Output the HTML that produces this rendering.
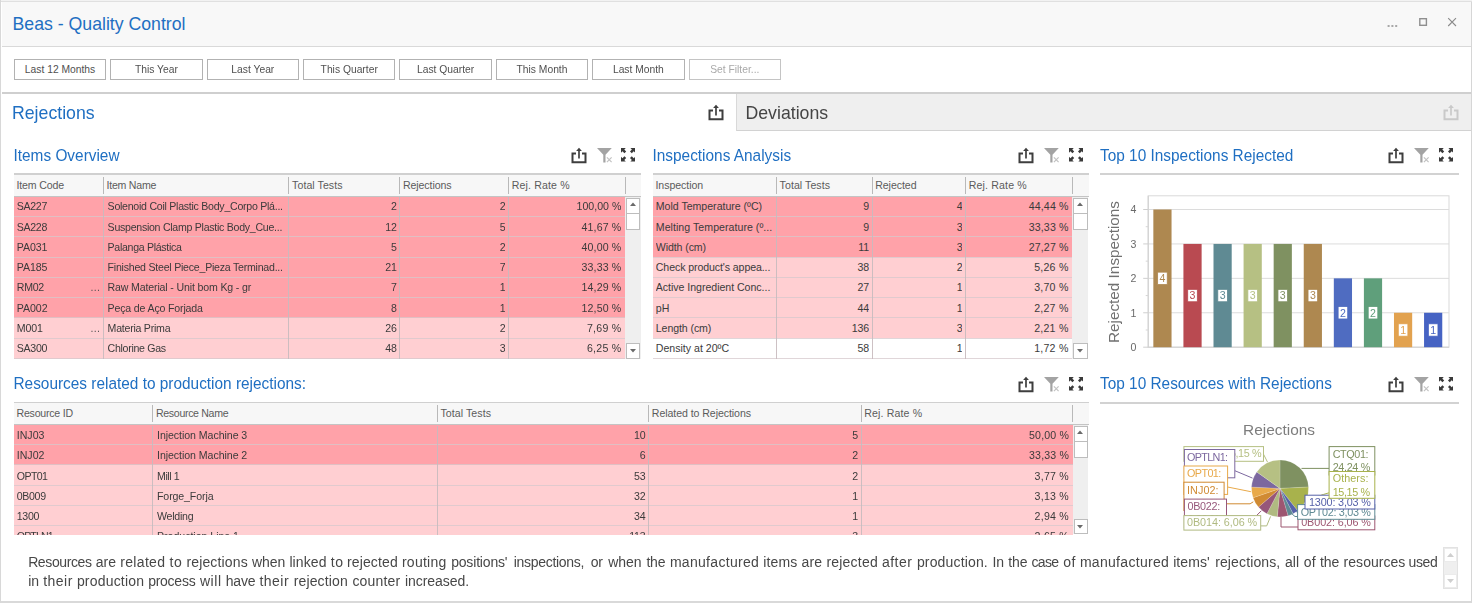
<!DOCTYPE html>
<html><head><meta charset="utf-8"><title>Beas - Quality Control</title>
<style>
*{box-sizing:border-box;margin:0;padding:0}
html,body{width:1472px;height:603px;overflow:hidden;background:#fff}
body{font-family:"Liberation Sans",sans-serif;position:relative;color:#3a3a3a}
.abs{position:absolute}
.wrap{position:absolute;left:0;top:0;width:1472px;height:603px;overflow:hidden;filter:blur(0.35px)}
.frame{position:absolute;left:0;top:0;width:1472px;height:603px;border-left:1.6px solid #d8d8d8;border-right:1.7px solid #d6d6d6;border-bottom:2.3px solid #d9d9d9;pointer-events:none}
.frame:before{content:"";position:absolute;left:0;top:0;width:1472px;height:0.9px;background:#f2f2f2}
.frame:after{content:"";position:absolute;left:0;top:0.9px;width:1472px;height:1px;background:#e0e0e0}
.titlebar{position:absolute;left:2px;top:1px;width:1469px;height:46px;background:#f8f8f8;border-bottom:1.5px solid #d9d9d9}
.h1{position:absolute;color:#1f6fc2;font-size:17.7px;white-space:nowrap;line-height:20px;transform:scaleY(1.07);transform-origin:0 62%}
.h2{position:absolute;color:#1f6fc2;font-size:15.4px;white-space:nowrap;line-height:20px;transform:scaleY(1.06);transform-origin:0 62%}
.btn{position:absolute;top:59px;height:20.6px;border:1px solid #b2b2b2;background:#fff;font-size:10.3px;line-height:20.4px;text-align:center;color:#505050;white-space:nowrap}
.ic{position:absolute;width:16px;height:16px}
.tbl{position:absolute;overflow:hidden;font-size:10.6px;letter-spacing:-0.2px;color:#3b3b3b}
.tl{position:absolute;left:0;top:0;width:100%;height:1.7px;background:#d0d0d0}
.hd{position:absolute;left:0;top:1.7px;height:22.3px;background:#f7f7f7;border-bottom:1.5px solid #c4c4c4}
.ht{position:absolute;top:2px;line-height:20px;color:#5b5b5b;white-space:nowrap}
.hs{position:absolute;top:4px;width:1px;height:17px;background:#b9b9b9}
.rw{position:absolute;left:0}
.c{position:absolute;top:0px;line-height:20px;white-space:nowrap;overflow:hidden}
.c.r{text-align:right}
.dots{position:absolute;left:73.7px;top:0;letter-spacing:0.3px;color:#555}
.rl{position:absolute;left:0;height:1px;background:rgba(214,200,204,0.75)}
.vs{position:absolute;width:1px;background:rgba(200,186,190,0.9)}
.sb{position:absolute;background:#efefef}
.sbb{position:absolute;background:#fff;border:1.2px solid #bdbdbd}
.hr{position:absolute;height:1.7px;background:#d2d2d2}
</style></head><body>
<div class="wrap">

<div class="titlebar"></div>
<div class="h1" style="left:12.5px;top:14px">Beas - Quality Control</div>
<svg class="abs" style="left:1386px;top:14px" width="74" height="16" viewBox="0 0 74 16"><g fill="#a8a8a8"><rect x="1.6" y="11" width="2" height="2"/><rect x="5.4" y="11" width="2" height="2"/><rect x="9.2" y="11" width="2" height="2"/></g><rect x="33.8" y="4.7" width="6.6" height="6.6" fill="none" stroke="#8f8f8f" stroke-width="1.4"/><path d="M62.2 4.2L70 12M70 4.2L62.2 12" stroke="#8a8a8a" stroke-width="1.1" fill="none"/></svg>
<div class="btn" style="left:13.90px;width:92.3px">Last 12 Months</div>
<div class="btn" style="left:110.29px;width:92.3px">This Year</div>
<div class="btn" style="left:206.68px;width:92.3px">Last Year</div>
<div class="btn" style="left:303.07px;width:92.3px">This Quarter</div>
<div class="btn" style="left:399.46px;width:92.3px">Last Quarter</div>
<div class="btn" style="left:495.85px;width:92.3px">This Month</div>
<div class="btn" style="left:592.24px;width:92.3px">Last Month</div>
<div class="btn" style="left:688.63px;width:92.3px;color:#a9a9a9;border-color:#c4c4c4">Set Filter...</div>
<div class="abs" style="left:2px;top:92px;width:1469px;height:1.6px;background:#cfcfcf"></div>
<div class="abs" style="left:736px;top:93.5px;width:1735px;height:37.5px;background:#efefef;border-left:1px solid #d9d9d9;border-bottom:1.6px solid #d2d2d2;width:734.5px"></div>
<div class="h1" style="left:12px;top:103px">Rejections</div>
<div class="h1" style="left:745.5px;top:103px;color:#454545">Deviations</div>
<div class="ic" style="left:708px;top:103.5px"><svg width="16" height="17" viewBox="0 0 16 17" style="position:absolute;left:0;top:0"><path d="M5 6.5H1.5V15.3H14.5V6.5H11" fill="none" stroke="#3e3e3e" stroke-width="2" stroke-linejoin="miter"/><path d="M8 11.6V2.5" stroke="#3e3e3e" stroke-width="1.7" fill="none"/><path d="M5.1 4.1L8 0.7L10.9 4.1Z" fill="#3e3e3e"/></svg></div>
<div class="ic" style="left:1442.5px;top:103.5px"><svg width="16" height="17" viewBox="0 0 16 17" style="position:absolute;left:0;top:0"><path d="M5 6.5H1.5V15.3H14.5V6.5H11" fill="none" stroke="#c9c9c9" stroke-width="2" stroke-linejoin="miter"/><path d="M8 11.6V2.5" stroke="#c9c9c9" stroke-width="1.7" fill="none"/><path d="M5.1 4.1L8 0.7L10.9 4.1Z" fill="#c9c9c9"/></svg></div>
<div class="h2" style="left:13.5px;top:145.5px">Items Overview</div>
<div class="h2" style="left:652.5px;top:145.5px">Inspections Analysis</div>
<div class="h2" style="left:1100px;top:145.5px">Top 10 Inspections Rejected</div>
<div class="h2" style="left:13.5px;top:374px">Resources related to production rejections:</div>
<div class="h2" style="left:1100px;top:374px">Top 10 Resources with Rejections</div>
<div class="ic" style="left:570.6px;top:146.6px"><svg width="16" height="17" viewBox="0 0 16 17" style="position:absolute;left:0;top:0"><path d="M5 6.5H1.5V15.3H14.5V6.5H11" fill="none" stroke="#3e3e3e" stroke-width="2" stroke-linejoin="miter"/><path d="M8 11.6V2.5" stroke="#3e3e3e" stroke-width="1.7" fill="none"/><path d="M5.1 4.1L8 0.7L10.9 4.1Z" fill="#3e3e3e"/></svg></div><div class="ic" style="left:596.7px;top:148px"><svg width="16" height="16" viewBox="0 0 16 16" style="position:absolute;left:0;top:0"><path d="M0 0H14.8L8.5 6.8V14.4H6.3V6.8Z" fill="#a3a3a3"/><path d="M9.9 9.3L14.6 14.1M14.6 9.3L9.9 14.1" stroke="#c2c2c2" stroke-width="1.2" fill="none"/></svg></div><div class="ic" style="left:621.3px;top:148.2px"><svg width="15" height="14" viewBox="0 0 14.2 13.5" preserveAspectRatio="none" style="position:absolute;left:0;top:0;width:14.2px;height:13.5px"><g fill="#3a3a3a"><path d="M0 0H4.8L3.3 1.5L5.2 3.4L3.4 5.2L1.5 3.3L0 4.8Z"/><path d="M14.2 0H9.4L10.9 1.5L9 3.4L10.8 5.2L12.7 3.3L14.2 4.8Z"/><path d="M0 13.5H4.8L3.3 12L5.2 10.1L3.4 8.3L1.5 10.2L0 8.7Z"/><path d="M14.2 13.5H9.4L10.9 12L9 10.1L10.8 8.3L12.7 10.2L14.2 8.7Z"/></g></svg></div>
<div class="ic" style="left:1018.1px;top:146.6px"><svg width="16" height="17" viewBox="0 0 16 17" style="position:absolute;left:0;top:0"><path d="M5 6.5H1.5V15.3H14.5V6.5H11" fill="none" stroke="#3e3e3e" stroke-width="2" stroke-linejoin="miter"/><path d="M8 11.6V2.5" stroke="#3e3e3e" stroke-width="1.7" fill="none"/><path d="M5.1 4.1L8 0.7L10.9 4.1Z" fill="#3e3e3e"/></svg></div><div class="ic" style="left:1044.2px;top:148px"><svg width="16" height="16" viewBox="0 0 16 16" style="position:absolute;left:0;top:0"><path d="M0 0H14.8L8.5 6.8V14.4H6.3V6.8Z" fill="#a3a3a3"/><path d="M9.9 9.3L14.6 14.1M14.6 9.3L9.9 14.1" stroke="#c2c2c2" stroke-width="1.2" fill="none"/></svg></div><div class="ic" style="left:1068.8px;top:148.2px"><svg width="15" height="14" viewBox="0 0 14.2 13.5" preserveAspectRatio="none" style="position:absolute;left:0;top:0;width:14.2px;height:13.5px"><g fill="#3a3a3a"><path d="M0 0H4.8L3.3 1.5L5.2 3.4L3.4 5.2L1.5 3.3L0 4.8Z"/><path d="M14.2 0H9.4L10.9 1.5L9 3.4L10.8 5.2L12.7 3.3L14.2 4.8Z"/><path d="M0 13.5H4.8L3.3 12L5.2 10.1L3.4 8.3L1.5 10.2L0 8.7Z"/><path d="M14.2 13.5H9.4L10.9 12L9 10.1L10.8 8.3L12.7 10.2L14.2 8.7Z"/></g></svg></div>
<div class="ic" style="left:1388.1px;top:146.6px"><svg width="16" height="17" viewBox="0 0 16 17" style="position:absolute;left:0;top:0"><path d="M5 6.5H1.5V15.3H14.5V6.5H11" fill="none" stroke="#3e3e3e" stroke-width="2" stroke-linejoin="miter"/><path d="M8 11.6V2.5" stroke="#3e3e3e" stroke-width="1.7" fill="none"/><path d="M5.1 4.1L8 0.7L10.9 4.1Z" fill="#3e3e3e"/></svg></div><div class="ic" style="left:1414.2px;top:148px"><svg width="16" height="16" viewBox="0 0 16 16" style="position:absolute;left:0;top:0"><path d="M0 0H14.8L8.5 6.8V14.4H6.3V6.8Z" fill="#a3a3a3"/><path d="M9.9 9.3L14.6 14.1M14.6 9.3L9.9 14.1" stroke="#c2c2c2" stroke-width="1.2" fill="none"/></svg></div><div class="ic" style="left:1438.8px;top:148.2px"><svg width="15" height="14" viewBox="0 0 14.2 13.5" preserveAspectRatio="none" style="position:absolute;left:0;top:0;width:14.2px;height:13.5px"><g fill="#3a3a3a"><path d="M0 0H4.8L3.3 1.5L5.2 3.4L3.4 5.2L1.5 3.3L0 4.8Z"/><path d="M14.2 0H9.4L10.9 1.5L9 3.4L10.8 5.2L12.7 3.3L14.2 4.8Z"/><path d="M0 13.5H4.8L3.3 12L5.2 10.1L3.4 8.3L1.5 10.2L0 8.7Z"/><path d="M14.2 13.5H9.4L10.9 12L9 10.1L10.8 8.3L12.7 10.2L14.2 8.7Z"/></g></svg></div>
<div class="ic" style="left:1018.1px;top:375.6px"><svg width="16" height="17" viewBox="0 0 16 17" style="position:absolute;left:0;top:0"><path d="M5 6.5H1.5V15.3H14.5V6.5H11" fill="none" stroke="#3e3e3e" stroke-width="2" stroke-linejoin="miter"/><path d="M8 11.6V2.5" stroke="#3e3e3e" stroke-width="1.7" fill="none"/><path d="M5.1 4.1L8 0.7L10.9 4.1Z" fill="#3e3e3e"/></svg></div><div class="ic" style="left:1044.2px;top:377px"><svg width="16" height="16" viewBox="0 0 16 16" style="position:absolute;left:0;top:0"><path d="M0 0H14.8L8.5 6.8V14.4H6.3V6.8Z" fill="#a3a3a3"/><path d="M9.9 9.3L14.6 14.1M14.6 9.3L9.9 14.1" stroke="#c2c2c2" stroke-width="1.2" fill="none"/></svg></div><div class="ic" style="left:1068.8px;top:377.2px"><svg width="15" height="14" viewBox="0 0 14.2 13.5" preserveAspectRatio="none" style="position:absolute;left:0;top:0;width:14.2px;height:13.5px"><g fill="#3a3a3a"><path d="M0 0H4.8L3.3 1.5L5.2 3.4L3.4 5.2L1.5 3.3L0 4.8Z"/><path d="M14.2 0H9.4L10.9 1.5L9 3.4L10.8 5.2L12.7 3.3L14.2 4.8Z"/><path d="M0 13.5H4.8L3.3 12L5.2 10.1L3.4 8.3L1.5 10.2L0 8.7Z"/><path d="M14.2 13.5H9.4L10.9 12L9 10.1L10.8 8.3L12.7 10.2L14.2 8.7Z"/></g></svg></div>
<div class="ic" style="left:1388.1px;top:375.6px"><svg width="16" height="17" viewBox="0 0 16 17" style="position:absolute;left:0;top:0"><path d="M5 6.5H1.5V15.3H14.5V6.5H11" fill="none" stroke="#3e3e3e" stroke-width="2" stroke-linejoin="miter"/><path d="M8 11.6V2.5" stroke="#3e3e3e" stroke-width="1.7" fill="none"/><path d="M5.1 4.1L8 0.7L10.9 4.1Z" fill="#3e3e3e"/></svg></div><div class="ic" style="left:1414.2px;top:377px"><svg width="16" height="16" viewBox="0 0 16 16" style="position:absolute;left:0;top:0"><path d="M0 0H14.8L8.5 6.8V14.4H6.3V6.8Z" fill="#a3a3a3"/><path d="M9.9 9.3L14.6 14.1M14.6 9.3L9.9 14.1" stroke="#c2c2c2" stroke-width="1.2" fill="none"/></svg></div><div class="ic" style="left:1438.8px;top:377.2px"><svg width="15" height="14" viewBox="0 0 14.2 13.5" preserveAspectRatio="none" style="position:absolute;left:0;top:0;width:14.2px;height:13.5px"><g fill="#3a3a3a"><path d="M0 0H4.8L3.3 1.5L5.2 3.4L3.4 5.2L1.5 3.3L0 4.8Z"/><path d="M14.2 0H9.4L10.9 1.5L9 3.4L10.8 5.2L12.7 3.3L14.2 4.8Z"/><path d="M0 13.5H4.8L3.3 12L5.2 10.1L3.4 8.3L1.5 10.2L0 8.7Z"/><path d="M14.2 13.5H9.4L10.9 12L9 10.1L10.8 8.3L12.7 10.2L14.2 8.7Z"/></g></svg></div>
<div class="tbl" style="left:14px;top:173px;width:627px;height:186.2px">
<div class="rw" style="top:23.21px;width:611.2px;height:20.79px;background:#ffa2a9">
<div class="c" style="left:2.8px;top:0px;width:85.8px"><span style="letter-spacing:-0.323px">SA227</span></div>
<div class="c" style="left:93.6px;top:0px;width:180.50000000000003px"><span style="letter-spacing:-0.264px">Solenoid Coil Plastic Body_Corpo Plá...</span></div>
<div class="c r" style="left:275.1px;top:0px;width:107.59999999999998px">2</div>
<div class="c r" style="left:386px;top:0px;width:105.39999999999999px">2</div>
<div class="c r" style="left:494.7px;top:0px;width:112.70000000000006px"><span style="letter-spacing:0.017px">100,00 %</span></div>
</div>
<div class="rw" style="top:43.50px;width:611.2px;height:20.79px;background:#ffa2a9">
<div class="c" style="left:2.8px;top:0px;width:85.8px"><span style="letter-spacing:-0.323px">SA228</span></div>
<div class="c" style="left:93.6px;top:0px;width:180.50000000000003px"><span style="letter-spacing:-0.273px">Suspension Clamp Plastic Body_Cue...</span></div>
<div class="c r" style="left:275.1px;top:0px;width:107.59999999999998px">12</div>
<div class="c r" style="left:386px;top:0px;width:105.39999999999999px">5</div>
<div class="c r" style="left:494.7px;top:0px;width:112.70000000000006px"><span style="letter-spacing:0.146px">41,67 %</span></div>
</div>
<div class="rw" style="top:63.79px;width:611.2px;height:20.79px;background:#ffa2a9">
<div class="c" style="left:2.8px;top:0px;width:85.8px"><span style="letter-spacing:-0.106px">PA031</span></div>
<div class="c" style="left:93.6px;top:0px;width:180.50000000000003px"><span style="letter-spacing:-0.308px">Palanga Plástica</span></div>
<div class="c r" style="left:275.1px;top:0px;width:107.59999999999998px">5</div>
<div class="c r" style="left:386px;top:0px;width:105.39999999999999px">2</div>
<div class="c r" style="left:494.7px;top:0px;width:112.70000000000006px"><span style="letter-spacing:0.146px">40,00 %</span></div>
</div>
<div class="rw" style="top:84.08px;width:611.2px;height:20.79px;background:#ffa2a9">
<div class="c" style="left:2.8px;top:0px;width:85.8px"><span style="letter-spacing:-0.106px">PA185</span></div>
<div class="c" style="left:93.6px;top:0px;width:180.50000000000003px"><span style="letter-spacing:-0.235px">Finished Steel Piece_Pieza Terminad...</span></div>
<div class="c r" style="left:275.1px;top:0px;width:107.59999999999998px">21</div>
<div class="c r" style="left:386px;top:0px;width:105.39999999999999px">7</div>
<div class="c r" style="left:494.7px;top:0px;width:112.70000000000006px"><span style="letter-spacing:0.146px">33,33 %</span></div>
</div>
<div class="rw" style="top:104.37px;width:611.2px;height:20.79px;background:#ffa2a9">
<div class="c" style="left:2.8px;top:0px;width:85.8px"><span style="letter-spacing:-0.316px">RM02<span class="dots">...</span></span></div>
<div class="c" style="left:93.6px;top:0px;width:180.50000000000003px"><span style="letter-spacing:-0.157px">Raw Material - Unit bom Kg - gr</span></div>
<div class="c r" style="left:275.1px;top:0px;width:107.59999999999998px">7</div>
<div class="c r" style="left:386px;top:0px;width:105.39999999999999px">1</div>
<div class="c r" style="left:494.7px;top:0px;width:112.70000000000006px"><span style="letter-spacing:0.146px">14,29 %</span></div>
</div>
<div class="rw" style="top:124.66px;width:611.2px;height:20.79px;background:#ffa2a9">
<div class="c" style="left:2.8px;top:0px;width:85.8px"><span style="letter-spacing:-0.066px">PA002</span></div>
<div class="c" style="left:93.6px;top:0px;width:180.50000000000003px"><span style="letter-spacing:-0.166px">Peça de Aço Forjada</span></div>
<div class="c r" style="left:275.1px;top:0px;width:107.59999999999998px">8</div>
<div class="c r" style="left:386px;top:0px;width:105.39999999999999px">1</div>
<div class="c r" style="left:494.7px;top:0px;width:112.70000000000006px"><span style="letter-spacing:0.146px">12,50 %</span></div>
</div>
<div class="rw" style="top:144.95px;width:611.2px;height:20.79px;background:#ffcfd2">
<div class="c" style="left:2.8px;top:0px;width:85.8px"><span style="letter-spacing:-0.175px">M001<span class="dots">...</span></span></div>
<div class="c" style="left:93.6px;top:0px;width:180.50000000000003px"><span style="letter-spacing:-0.249px">Materia Prima</span></div>
<div class="c r" style="left:275.1px;top:0px;width:107.59999999999998px">26</div>
<div class="c r" style="left:386px;top:0px;width:105.39999999999999px">2</div>
<div class="c r" style="left:494.7px;top:0px;width:112.70000000000006px"><span style="letter-spacing:0.236px">7,69 %</span></div>
</div>
<div class="rw" style="top:165.24px;width:611.2px;height:20.79px;background:#ffcfd2">
<div class="c" style="left:2.8px;top:0px;width:85.8px"><span style="letter-spacing:-0.302px">SA300</span></div>
<div class="c" style="left:93.6px;top:0px;width:180.50000000000003px"><span style="letter-spacing:-0.302px">Chlorine Gas</span></div>
<div class="c r" style="left:275.1px;top:0px;width:107.59999999999998px">48</div>
<div class="c r" style="left:386px;top:0px;width:105.39999999999999px">3</div>
<div class="c r" style="left:494.7px;top:0px;width:112.70000000000006px"><span style="letter-spacing:0.236px">6,25 %</span></div>
</div>
<div class="rl" style="top:43.00px;width:611.2px"></div>
<div class="rl" style="top:63.29px;width:611.2px"></div>
<div class="rl" style="top:83.58px;width:611.2px"></div>
<div class="rl" style="top:103.87px;width:611.2px"></div>
<div class="rl" style="top:124.16px;width:611.2px"></div>
<div class="rl" style="top:144.45px;width:611.2px"></div>
<div class="rl" style="top:164.74px;width:611.2px"></div>
<div class="rl" style="top:185.03px;width:611.2px"></div>
<div class="vs" style="left:89px;top:24px;height:186.2px"></div>
<div class="vs" style="left:274px;top:24px;height:186.2px"></div>
<div class="vs" style="left:385px;top:24px;height:186.2px"></div>
<div class="vs" style="left:494px;top:24px;height:186.2px"></div>
<div class="tl"></div>
<div class="hd" style="width:627px;height:22.41px"></div>
<div class="ht" style="left:2.5px;top:2.11px"><span style="letter-spacing:-0.153px">Item Code</span></div>
<div class="ht" style="left:92.6px;top:2.11px"><span style="letter-spacing:-0.257px">Item Name</span></div>
<div class="ht" style="left:278.1px;top:2.11px"><span style="letter-spacing:0.058px">Total Tests</span></div>
<div class="ht" style="left:389px;top:2.11px"><span style="letter-spacing:-0.107px">Rejections</span></div>
<div class="ht" style="left:497.7px;top:2.11px"><span style="letter-spacing:0.134px">Rej. Rate %</span></div>
<div class="hs" style="left:89px;top:4.11px"></div>
<div class="hs" style="left:274px;top:4.11px"></div>
<div class="hs" style="left:385px;top:4.11px"></div>
<div class="hs" style="left:494px;top:4.11px"></div>
<div class="hs" style="left:611px;top:4.11px"></div>
<div class="sb" style="left:611.2px;top:24.11px;width:15.799999999999955px;height:162.2px"></div>
<div class="sbb" style="left:612.0px;top:24.61px;width:14.199999999999955px;height:16.5px"><svg width="6" height="4" viewBox="0 0 6 4" style="position:absolute;left:2.8999999999999773px;top:3.8px"><path d="M0 4L3 0.5L6 4Z" fill="#6a6a6a"/></svg></div>
<div class="sbb" style="left:612.0px;top:40.31px;width:14.199999999999955px;height:16.4px"></div>
<div class="sbb" style="left:612.0px;top:170.2px;width:14.199999999999955px;height:15.4px"><svg width="6" height="4" viewBox="0 0 6 4" style="position:absolute;left:2.8999999999999773px;top:5px"><path d="M0 0L3 3.5L6 0Z" fill="#6a6a6a"/></svg></div>
</div>
<div class="tbl" style="left:653px;top:173px;width:435.5px;height:186.2px">
<div class="rw" style="top:23.21px;width:419.4000000000001px;height:20.79px;background:#ffa2a9">
<div class="c" style="left:2.8px;top:0px;width:119.80000000000003px"><span style="letter-spacing:-0.019px">Mold Temperature (ºC)</span></div>
<div class="c r" style="left:123.60000000000002px;top:0px;width:92.30000000000003px">9</div>
<div class="c r" style="left:219.20000000000005px;top:0px;width:90.29999999999991px">4</div>
<div class="c r" style="left:312.79999999999995px;top:0px;width:102.80000000000014px"><span style="letter-spacing:0.146px">44,44 %</span></div>
</div>
<div class="rw" style="top:43.50px;width:419.4000000000001px;height:20.79px;background:#ffa2a9">
<div class="c" style="left:2.8px;top:0px;width:119.80000000000003px"><span style="letter-spacing:0.038px">Melting Temperature (º...</span></div>
<div class="c r" style="left:123.60000000000002px;top:0px;width:92.30000000000003px">9</div>
<div class="c r" style="left:219.20000000000005px;top:0px;width:90.29999999999991px">3</div>
<div class="c r" style="left:312.79999999999995px;top:0px;width:102.80000000000014px"><span style="letter-spacing:0.146px">33,33 %</span></div>
</div>
<div class="rw" style="top:63.79px;width:419.4000000000001px;height:20.79px;background:#ffa2a9">
<div class="c" style="left:2.8px;top:0px;width:119.80000000000003px"><span style="letter-spacing:-0.100px">Width (cm)</span></div>
<div class="c r" style="left:123.60000000000002px;top:0px;width:92.30000000000003px">11</div>
<div class="c r" style="left:219.20000000000005px;top:0px;width:90.29999999999991px">3</div>
<div class="c r" style="left:312.79999999999995px;top:0px;width:102.80000000000014px"><span style="letter-spacing:0.146px">27,27 %</span></div>
</div>
<div class="rw" style="top:84.08px;width:419.4000000000001px;height:20.79px;background:#ffcfd2">
<div class="c" style="left:2.8px;top:0px;width:119.80000000000003px"><span style="letter-spacing:-0.098px">Check product's appea...</span></div>
<div class="c r" style="left:123.60000000000002px;top:0px;width:92.30000000000003px">38</div>
<div class="c r" style="left:219.20000000000005px;top:0px;width:90.29999999999991px">2</div>
<div class="c r" style="left:312.79999999999995px;top:0px;width:102.80000000000014px"><span style="letter-spacing:0.236px">5,26 %</span></div>
</div>
<div class="rw" style="top:104.37px;width:419.4000000000001px;height:20.79px;background:#ffcfd2">
<div class="c" style="left:2.8px;top:0px;width:119.80000000000003px"><span style="letter-spacing:-0.037px">Active Ingredient Conc...</span></div>
<div class="c r" style="left:123.60000000000002px;top:0px;width:92.30000000000003px">27</div>
<div class="c r" style="left:219.20000000000005px;top:0px;width:90.29999999999991px">1</div>
<div class="c r" style="left:312.79999999999995px;top:0px;width:102.80000000000014px"><span style="letter-spacing:0.236px">3,70 %</span></div>
</div>
<div class="rw" style="top:124.66px;width:419.4000000000001px;height:20.79px;background:#ffcfd2">
<div class="c" style="left:2.8px;top:0px;width:119.80000000000003px"><span style="letter-spacing:-0.023px">pH</span></div>
<div class="c r" style="left:123.60000000000002px;top:0px;width:92.30000000000003px">44</div>
<div class="c r" style="left:219.20000000000005px;top:0px;width:90.29999999999991px">1</div>
<div class="c r" style="left:312.79999999999995px;top:0px;width:102.80000000000014px"><span style="letter-spacing:0.236px">2,27 %</span></div>
</div>
<div class="rw" style="top:144.95px;width:419.4000000000001px;height:20.79px;background:#ffcfd2">
<div class="c" style="left:2.8px;top:0px;width:119.80000000000003px"><span style="letter-spacing:-0.094px">Length (cm)</span></div>
<div class="c r" style="left:123.60000000000002px;top:0px;width:92.30000000000003px">136</div>
<div class="c r" style="left:219.20000000000005px;top:0px;width:90.29999999999991px">3</div>
<div class="c r" style="left:312.79999999999995px;top:0px;width:102.80000000000014px"><span style="letter-spacing:0.236px">2,21 %</span></div>
</div>
<div class="rw" style="top:165.24px;width:419.4000000000001px;height:20.79px;background:#ffffff">
<div class="c" style="left:2.8px;top:0px;width:119.80000000000003px"><span style="letter-spacing:-0.004px">Density at 20ºC</span></div>
<div class="c r" style="left:123.60000000000002px;top:0px;width:92.30000000000003px">58</div>
<div class="c r" style="left:219.20000000000005px;top:0px;width:90.29999999999991px">1</div>
<div class="c r" style="left:312.79999999999995px;top:0px;width:102.80000000000014px"><span style="letter-spacing:0.236px">1,72 %</span></div>
</div>
<div class="rl" style="top:43.00px;width:419.4000000000001px"></div>
<div class="rl" style="top:63.29px;width:419.4000000000001px"></div>
<div class="rl" style="top:83.58px;width:419.4000000000001px"></div>
<div class="rl" style="top:103.87px;width:419.4000000000001px"></div>
<div class="rl" style="top:124.16px;width:419.4000000000001px"></div>
<div class="rl" style="top:144.45px;width:419.4000000000001px"></div>
<div class="rl" style="top:164.74px;width:419.4000000000001px"></div>
<div class="rl" style="top:185.03px;width:419.4000000000001px"></div>
<div class="vs" style="left:123px;top:24px;height:186.2px"></div>
<div class="vs" style="left:219px;top:24px;height:186.2px"></div>
<div class="vs" style="left:312px;top:24px;height:186.2px"></div>
<div class="tl"></div>
<div class="hd" style="width:435.5px;height:22.41px"></div>
<div class="ht" style="left:2.5px;top:2.11px"><span style="letter-spacing:-0.070px">Inspection</span></div>
<div class="ht" style="left:126.60000000000002px;top:2.11px"><span style="letter-spacing:0.058px">Total Tests</span></div>
<div class="ht" style="left:222.20000000000005px;top:2.11px"><span style="letter-spacing:-0.064px">Rejected</span></div>
<div class="ht" style="left:315.79999999999995px;top:2.11px"><span style="letter-spacing:0.134px">Rej. Rate %</span></div>
<div class="hs" style="left:123px;top:4.11px"></div>
<div class="hs" style="left:219px;top:4.11px"></div>
<div class="hs" style="left:312px;top:4.11px"></div>
<div class="hs" style="left:419px;top:4.11px"></div>
<div class="sb" style="left:419.4000000000001px;top:24.11px;width:16.09999999999991px;height:162.2px"></div>
<div class="sbb" style="left:420.2000000000001px;top:24.61px;width:14.49999999999991px;height:16.5px"><svg width="6" height="4" viewBox="0 0 6 4" style="position:absolute;left:3.0499999999999545px;top:3.8px"><path d="M0 4L3 0.5L6 4Z" fill="#6a6a6a"/></svg></div>
<div class="sbb" style="left:420.2000000000001px;top:40.31px;width:14.49999999999991px;height:16.4px"></div>
<div class="sbb" style="left:420.2000000000001px;top:170.2px;width:14.49999999999991px;height:15.4px"><svg width="6" height="4" viewBox="0 0 6 4" style="position:absolute;left:3.0499999999999545px;top:5px"><path d="M0 0L3 3.5L6 0Z" fill="#6a6a6a"/></svg></div>
</div>
<div class="tbl" style="left:14px;top:401.7px;width:1074.5px;height:133.3px">
<div class="rw" style="top:22.55px;width:1058.8px;height:20.79px;background:#ffa2a9">
<div class="c" style="left:2.8px;top:0.8px;width:135.2px"><span style="letter-spacing:-0.017px">INJ03</span></div>
<div class="c" style="left:143px;top:0.8px;width:279.5px"><span style="letter-spacing:-0.057px">Injection Machine 3</span></div>
<div class="c r" style="left:423.5px;top:0.8px;width:207.99999999999994px">10</div>
<div class="c r" style="left:634.8px;top:0.8px;width:209.10000000000008px">5</div>
<div class="c r" style="left:847.2px;top:0.8px;width:207.7999999999999px"><span style="letter-spacing:0.146px">50,00 %</span></div>
</div>
<div class="rw" style="top:42.84px;width:1058.8px;height:20.79px;background:#ffa2a9">
<div class="c" style="left:2.8px;top:0.8px;width:135.2px"><span style="letter-spacing:-0.017px">INJ02</span></div>
<div class="c" style="left:143px;top:0.8px;width:279.5px"><span style="letter-spacing:-0.057px">Injection Machine 2</span></div>
<div class="c r" style="left:423.5px;top:0.8px;width:207.99999999999994px">6</div>
<div class="c r" style="left:634.8px;top:0.8px;width:209.10000000000008px">2</div>
<div class="c r" style="left:847.2px;top:0.8px;width:207.7999999999999px"><span style="letter-spacing:0.146px">33,33 %</span></div>
</div>
<div class="rw" style="top:63.13px;width:1058.8px;height:20.79px;background:#ffcfd2">
<div class="c" style="left:2.8px;top:0.8px;width:135.2px"><span style="letter-spacing:-0.592px">OPT01</span></div>
<div class="c" style="left:143px;top:0.8px;width:279.5px"><span style="letter-spacing:-0.422px">Mill 1</span></div>
<div class="c r" style="left:423.5px;top:0.8px;width:207.99999999999994px">53</div>
<div class="c r" style="left:634.8px;top:0.8px;width:209.10000000000008px">2</div>
<div class="c r" style="left:847.2px;top:0.8px;width:207.7999999999999px"><span style="letter-spacing:0.236px">3,77 %</span></div>
</div>
<div class="rw" style="top:83.42px;width:1058.8px;height:20.79px;background:#ffcfd2">
<div class="c" style="left:2.8px;top:0.8px;width:135.2px"><span style="letter-spacing:-0.348px">0B009</span></div>
<div class="c" style="left:143px;top:0.8px;width:279.5px"><span style="letter-spacing:-0.118px">Forge_Forja</span></div>
<div class="c r" style="left:423.5px;top:0.8px;width:207.99999999999994px">32</div>
<div class="c r" style="left:634.8px;top:0.8px;width:209.10000000000008px">1</div>
<div class="c r" style="left:847.2px;top:0.8px;width:207.7999999999999px"><span style="letter-spacing:0.236px">3,13 %</span></div>
</div>
<div class="rw" style="top:103.71px;width:1058.8px;height:20.79px;background:#ffcfd2">
<div class="c" style="left:2.8px;top:0.8px;width:135.2px"><span style="letter-spacing:-0.345px">1300</span></div>
<div class="c" style="left:143px;top:0.8px;width:279.5px"><span style="letter-spacing:-0.242px">Welding</span></div>
<div class="c r" style="left:423.5px;top:0.8px;width:207.99999999999994px">34</div>
<div class="c r" style="left:634.8px;top:0.8px;width:209.10000000000008px">1</div>
<div class="c r" style="left:847.2px;top:0.8px;width:207.7999999999999px"><span style="letter-spacing:0.236px">2,94 %</span></div>
</div>
<div class="rw" style="top:124.00px;width:1058.8px;height:20.79px;background:#ffcfd2">
<div class="c" style="left:2.8px;top:0.8px;width:135.2px"><span style="letter-spacing:-0.870px">OPTLN1</span></div>
<div class="c" style="left:143px;top:0.8px;width:279.5px"><span style="letter-spacing:-0.028px">Production Line 1</span></div>
<div class="c r" style="left:423.5px;top:0.8px;width:207.99999999999994px">113</div>
<div class="c r" style="left:634.8px;top:0.8px;width:209.10000000000008px">3</div>
<div class="c r" style="left:847.2px;top:0.8px;width:207.7999999999999px"><span style="letter-spacing:0.236px">2,65 %</span></div>
</div>
<div class="rl" style="top:42.34px;width:1058.8px"></div>
<div class="rl" style="top:62.63px;width:1058.8px"></div>
<div class="rl" style="top:82.92px;width:1058.8px"></div>
<div class="rl" style="top:103.21px;width:1058.8px"></div>
<div class="rl" style="top:123.50px;width:1058.8px"></div>
<div class="rl" style="top:143.79px;width:1058.8px"></div>
<div class="vs" style="left:138px;top:24px;height:133.3px"></div>
<div class="vs" style="left:423px;top:24px;height:133.3px"></div>
<div class="vs" style="left:634px;top:24px;height:133.3px"></div>
<div class="vs" style="left:847px;top:24px;height:133.3px"></div>
<div class="tl"></div>
<div class="hd" style="width:1074.5px;height:21.75px"></div>
<div class="ht" style="left:2.5px;top:1.45px"><span style="letter-spacing:-0.226px">Resource ID</span></div>
<div class="ht" style="left:142px;top:1.45px"><span style="letter-spacing:-0.334px">Resource Name</span></div>
<div class="ht" style="left:426.5px;top:1.45px"><span style="letter-spacing:0.058px">Total Tests</span></div>
<div class="ht" style="left:637.8px;top:1.45px"><span style="letter-spacing:-0.072px">Related to Rejections</span></div>
<div class="ht" style="left:850.2px;top:1.45px"><span style="letter-spacing:0.134px">Rej. Rate %</span></div>
<div class="hs" style="left:138px;top:3.45px"></div>
<div class="hs" style="left:423px;top:3.45px"></div>
<div class="hs" style="left:634px;top:3.45px"></div>
<div class="hs" style="left:847px;top:3.45px"></div>
<div class="hs" style="left:1058px;top:3.45px"></div>
<div class="sb" style="left:1058.8px;top:23.45px;width:15.700000000000045px;height:109.30000000000001px"></div>
<div class="sbb" style="left:1059.6px;top:23.95px;width:14.100000000000046px;height:16.5px"><svg width="6" height="4" viewBox="0 0 6 4" style="position:absolute;left:2.8500000000000227px;top:3.8px"><path d="M0 4L3 0.5L6 4Z" fill="#6a6a6a"/></svg></div>
<div class="sbb" style="left:1059.6px;top:39.65px;width:14.100000000000046px;height:16.4px"></div>
<div class="sbb" style="left:1059.6px;top:117.30000000000001px;width:14.100000000000046px;height:15.4px"><svg width="6" height="4" viewBox="0 0 6 4" style="position:absolute;left:2.8500000000000227px;top:5px"><path d="M0 0L3 3.5L6 0Z" fill="#6a6a6a"/></svg></div>
</div>
<div class="hr" style="left:1100px;top:173px;width:359px"></div>
<div class="hr" style="left:1100px;top:402px;width:359px"></div>
<svg class="abs" style="left:1096px;top:180px" width="376" height="185" viewBox="1096 180 376 185" font-family="Liberation Sans, sans-serif">
<rect x="1148.2" y="195.8" width="300.79999999999995" height="151.39999999999998" fill="#fff" stroke="#d9d9d9" stroke-width="1"/>
<line x1="1148.2" x2="1449" y1="312.77" y2="312.77" stroke="#dcdcdc" stroke-width="1"/>
<line x1="1148.2" x2="1449" y1="278.35" y2="278.35" stroke="#dcdcdc" stroke-width="1"/>
<line x1="1148.2" x2="1449" y1="243.93" y2="243.93" stroke="#dcdcdc" stroke-width="1"/>
<line x1="1148.2" x2="1449" y1="209.50" y2="209.50" stroke="#dcdcdc" stroke-width="1"/>
<line x1="1148.2" x2="1148.2" y1="195.8" y2="347.2" stroke="#cfcfcf" stroke-width="1"/>
<line x1="1148.2" x2="1449" y1="347.2" y2="347.2" stroke="#cfcfcf" stroke-width="1"/>
<line x1="1143.2" x2="1148.2" y1="347.20" y2="347.20" stroke="#cfcfcf" stroke-width="1"/>
<text x="1133.5" y="351.00" font-size="10.6" fill="#6a6a6a" text-anchor="middle">0</text>
<line x1="1145.7" x2="1148.2" y1="329.99" y2="329.99" stroke="#d6d6d6" stroke-width="1"/>
<line x1="1143.2" x2="1148.2" y1="312.77" y2="312.77" stroke="#cfcfcf" stroke-width="1"/>
<text x="1133.5" y="316.57" font-size="10.6" fill="#6a6a6a" text-anchor="middle">1</text>
<line x1="1145.7" x2="1148.2" y1="295.56" y2="295.56" stroke="#d6d6d6" stroke-width="1"/>
<line x1="1143.2" x2="1148.2" y1="278.35" y2="278.35" stroke="#cfcfcf" stroke-width="1"/>
<text x="1133.5" y="282.15" font-size="10.6" fill="#6a6a6a" text-anchor="middle">2</text>
<line x1="1145.7" x2="1148.2" y1="261.14" y2="261.14" stroke="#d6d6d6" stroke-width="1"/>
<line x1="1143.2" x2="1148.2" y1="243.93" y2="243.93" stroke="#cfcfcf" stroke-width="1"/>
<text x="1133.5" y="247.73" font-size="10.6" fill="#6a6a6a" text-anchor="middle">3</text>
<line x1="1145.7" x2="1148.2" y1="226.71" y2="226.71" stroke="#d6d6d6" stroke-width="1"/>
<line x1="1143.2" x2="1148.2" y1="209.50" y2="209.50" stroke="#cfcfcf" stroke-width="1"/>
<text x="1133.5" y="213.30" font-size="10.6" fill="#6a6a6a" text-anchor="middle">4</text>
<rect x="1153.34" y="209.50" width="18.2" height="137.70" fill="#ae8850"/>
<rect x="1157.64" y="272.15" width="9.6" height="12.4" fill="#fff" stroke="#ae8850" stroke-width="0.8"/>
<text x="1162.44" y="282.15" font-size="10.6" fill="#ae8850" text-anchor="middle">4</text>
<rect x="1183.42" y="243.93" width="18.2" height="103.27" fill="#b94a51"/>
<rect x="1187.72" y="289.36" width="9.6" height="12.4" fill="#fff" stroke="#b94a51" stroke-width="0.8"/>
<text x="1192.52" y="299.36" font-size="10.6" fill="#b94a51" text-anchor="middle">3</text>
<rect x="1213.50" y="243.93" width="18.2" height="103.27" fill="#5f8a93"/>
<rect x="1217.80" y="289.36" width="9.6" height="12.4" fill="#fff" stroke="#5f8a93" stroke-width="0.8"/>
<text x="1222.60" y="299.36" font-size="10.6" fill="#5f8a93" text-anchor="middle">3</text>
<rect x="1243.58" y="243.93" width="18.2" height="103.27" fill="#b6c083"/>
<rect x="1247.88" y="289.36" width="9.6" height="12.4" fill="#fff" stroke="#b6c083" stroke-width="0.8"/>
<text x="1252.68" y="299.36" font-size="10.6" fill="#b6c083" text-anchor="middle">3</text>
<rect x="1273.66" y="243.93" width="18.2" height="103.27" fill="#7f9161"/>
<rect x="1277.96" y="289.36" width="9.6" height="12.4" fill="#fff" stroke="#7f9161" stroke-width="0.8"/>
<text x="1282.76" y="299.36" font-size="10.6" fill="#7f9161" text-anchor="middle">3</text>
<rect x="1303.74" y="243.93" width="18.2" height="103.27" fill="#ae8850"/>
<rect x="1308.04" y="289.36" width="9.6" height="12.4" fill="#fff" stroke="#ae8850" stroke-width="0.8"/>
<text x="1312.84" y="299.36" font-size="10.6" fill="#ae8850" text-anchor="middle">3</text>
<rect x="1333.82" y="278.35" width="18.2" height="68.85" fill="#4f6cc1"/>
<rect x="1338.12" y="306.57" width="9.6" height="12.4" fill="#fff" stroke="#4f6cc1" stroke-width="0.8"/>
<text x="1342.92" y="316.57" font-size="10.6" fill="#4f6cc1" text-anchor="middle">2</text>
<rect x="1363.90" y="278.35" width="18.2" height="68.85" fill="#5f9f7b"/>
<rect x="1368.20" y="306.57" width="9.6" height="12.4" fill="#fff" stroke="#5f9f7b" stroke-width="0.8"/>
<text x="1373.00" y="316.57" font-size="10.6" fill="#5f9f7b" text-anchor="middle">2</text>
<rect x="1393.98" y="312.77" width="18.2" height="34.43" fill="#e2a24f"/>
<rect x="1398.28" y="323.79" width="9.6" height="12.4" fill="#fff" stroke="#e2a24f" stroke-width="0.8"/>
<text x="1403.08" y="333.79" font-size="10.6" fill="#e2a24f" text-anchor="middle">1</text>
<rect x="1424.06" y="312.77" width="18.2" height="34.43" fill="#4663c3"/>
<rect x="1428.36" y="323.79" width="9.6" height="12.4" fill="#fff" stroke="#4663c3" stroke-width="0.8"/>
<text x="1433.16" y="333.79" font-size="10.6" fill="#4663c3" text-anchor="middle">1</text>
<text transform="translate(1119,272) rotate(-90)" font-size="15.3" fill="#707070" text-anchor="middle">Rejected Inspections</text>
</svg>
<svg class="abs" style="left:1170px;top:410px" width="230" height="130" viewBox="1170 410 230 130" font-family="Liberation Sans, sans-serif">
<text x="1279" y="435" font-size="15.3" fill="#7d7d7d" text-anchor="middle" textLength="72" lengthAdjust="spacingAndGlyphs">Rejections</text>
<path d="M1301.5 468.4 L1329.1 468.4" fill="none" stroke="#7f9161" stroke-width="1"/>
<path d="M1306.0 500.5 L1323.6 494.4 L1329.1 492.8" fill="none" stroke="#a8b24c" stroke-width="1"/>
<path d="M1263.5 454.2 L1267.5 462.1" fill="none" stroke="#b6c083" stroke-width="1"/>
<path d="M1234.8 470.7 L1252.5 478.1" fill="none" stroke="#7c689f" stroke-width="1"/>
<path d="M1227.6 487.0 L1250.9 491.7" fill="none" stroke="#e8a94a" stroke-width="1"/>
<path d="M1226.5 503.8 L1250.1 503.8 L1253.3 501.8" fill="none" stroke="#d08a32" stroke-width="1"/>
<path d="M1256.5 515.6 L1261.4 510.7" fill="none" stroke="#96577a" stroke-width="1"/>
<path d="M1260.7 525.9 L1266.7 525.9 L1270.6 516.4" fill="none" stroke="#b0ba81" stroke-width="1"/>
<path d="M1281.0 517.0 L1281.0 527.0 L1298.0 527.0" fill="none" stroke="#9d5671" stroke-width="1"/>
<path d="M1292.0 514.0 L1295.0 516.5 L1297.6 516.5" fill="none" stroke="#5f8a93" stroke-width="1"/>
<path d="M1296.0 511.5 L1300.0 513.0 L1305.0 509.0" fill="none" stroke="#5661a9" stroke-width="1"/>
<path d="M1280.0 488.4 L1280.00 459.90 A28.5 28.5 0 0 1 1308.47 487.04Z" fill="#7f9161" stroke="rgba(255,255,255,0.3)" stroke-width="0.5"/>
<path d="M1280.0 488.4 L1308.47 487.04 A28.5 28.5 0 0 1 1297.62 510.80Z" fill="#a8b24c" stroke="rgba(255,255,255,0.3)" stroke-width="0.5"/>
<path d="M1280.0 488.4 L1297.62 510.80 A28.5 28.5 0 0 1 1293.07 513.73Z" fill="#5661a9" stroke="rgba(255,255,255,0.3)" stroke-width="0.5"/>
<path d="M1280.0 488.4 L1293.07 513.73 A28.5 28.5 0 0 1 1288.04 515.74Z" fill="#5f8a93" stroke="rgba(255,255,255,0.3)" stroke-width="0.5"/>
<path d="M1280.0 488.4 L1288.04 515.74 A28.5 28.5 0 0 1 1277.30 516.77Z" fill="#9d5671" stroke="rgba(255,255,255,0.3)" stroke-width="0.5"/>
<path d="M1280.0 488.4 L1277.30 516.77 A28.5 28.5 0 0 1 1266.95 513.74Z" fill="#b0ba81" stroke="rgba(255,255,255,0.3)" stroke-width="0.5"/>
<path d="M1280.0 488.4 L1266.95 513.74 A28.5 28.5 0 0 1 1258.47 507.07Z" fill="#96577a" stroke="rgba(255,255,255,0.3)" stroke-width="0.5"/>
<path d="M1280.0 488.4 L1258.47 507.07 A28.5 28.5 0 0 1 1253.07 497.73Z" fill="#d08a32" stroke="rgba(255,255,255,0.3)" stroke-width="0.5"/>
<path d="M1280.0 488.4 L1253.07 497.73 A28.5 28.5 0 0 1 1251.53 487.06Z" fill="#e8a94a" stroke="rgba(255,255,255,0.3)" stroke-width="0.5"/>
<path d="M1280.0 488.4 L1251.53 487.06 A28.5 28.5 0 0 1 1256.78 471.88Z" fill="#7c689f" stroke="rgba(255,255,255,0.3)" stroke-width="0.5"/>
<path d="M1280.0 488.4 L1256.78 471.88 A28.5 28.5 0 0 1 1280.00 459.90Z" fill="#b6c083" stroke="rgba(255,255,255,0.3)" stroke-width="0.5"/>
<rect x="1183.9" y="446.6" width="79.6" height="14.7" fill="#fff" stroke="#b6c083" stroke-width="1"/><text x="1187.0" y="457.3" font-size="10.8" fill="#b6c083" textLength="74.5" lengthAdjust="spacing">OPT03: 15,15 %</text>
<rect x="1184.4" y="449.5" width="50.4" height="28.3" fill="#fff" stroke="#7c689f" stroke-width="1"/><text x="1187.0" y="460.8" font-size="10.8" fill="#7c689f" textLength="41" lengthAdjust="spacing">OPTLN1:</text><text x="1187.0" y="473.8" font-size="10.8" fill="#7c689f" textLength="32" lengthAdjust="spacing">9,09 %</text>
<rect x="1183.9" y="466.0" width="43.7" height="28.4" fill="#fff" stroke="#e8a94a" stroke-width="1"/><text x="1187.0" y="477.4" font-size="10.8" fill="#e8a94a" textLength="34.3" lengthAdjust="spacing">OPT01:</text><text x="1187.0" y="490.4" font-size="10.8" fill="#e8a94a" textLength="32" lengthAdjust="spacing">6,06 %</text>
<rect x="1183.9" y="482.2" width="40.2" height="28.3" fill="#fff" stroke="#d08a32" stroke-width="1"/><text x="1187.0" y="493.6" font-size="10.8" fill="#d08a32" textLength="31.6" lengthAdjust="spacing">INJ02:</text><text x="1187.0" y="506.6" font-size="10.8" fill="#d08a32" textLength="32" lengthAdjust="spacing">6,06 %</text>
<rect x="1184.4" y="499.1" width="42.1" height="28.4" fill="#fff" stroke="#96577a" stroke-width="1"/><text x="1187.5" y="509.7" font-size="10.8" fill="#96577a" textLength="32.7" lengthAdjust="spacing">0B022:</text><text x="1187.5" y="522.7" font-size="10.8" fill="#96577a" textLength="32" lengthAdjust="spacing">6,06 %</text>
<rect x="1183.9" y="515.6" width="76.8" height="14.5" fill="#fff" stroke="#b0ba81" stroke-width="1"/><text x="1187.0" y="526.4" font-size="10.8" fill="#b0ba81" textLength="70.2" lengthAdjust="spacing">0B014: 6,06 %</text>
<rect x="1298.0" y="516.0" width="76.8" height="13.8" fill="#fff" stroke="#9d5671" stroke-width="1"/><text x="1301.2" y="526.4" font-size="10.8" fill="#9d5671" textLength="69.7" lengthAdjust="spacing">0B002: 6,06 %</text>
<rect x="1297.6" y="504.6" width="77.2" height="14.7" fill="#fff" stroke="#5f8a93" stroke-width="1"/><text x="1300.7" y="515.6" font-size="10.8" fill="#5f8a93" textLength="70.2" lengthAdjust="spacing">OPT02: 3,03 %</text>
<rect x="1305.0" y="495.2" width="69.8" height="13.8" fill="#fff" stroke="#5661a9" stroke-width="1"/><text x="1309.0" y="505.9" font-size="10.8" fill="#5661a9" textLength="61.9" lengthAdjust="spacing">1300: 3,03 %</text>
<rect x="1329.1" y="446.6" width="45.7" height="28.4" fill="#fff" stroke="#7f9161" stroke-width="1"/><text x="1332.7" y="457.7" font-size="10.8" fill="#7f9161" textLength="35.8" lengthAdjust="spacing">CTQ01:</text><text x="1332.7" y="471.2" font-size="10.8" fill="#7f9161" textLength="37.6" lengthAdjust="spacing">24,24 %</text>
<rect x="1329.1" y="471.5" width="45.7" height="26.8" fill="#fff" stroke="#a8b24c" stroke-width="1"/><text x="1332.7" y="481.8" font-size="10.8" fill="#a8b24c" textLength="35.8" lengthAdjust="spacing">Others:</text><text x="1332.7" y="495.5" font-size="10.8" fill="#a8b24c" textLength="37.4" lengthAdjust="spacing">15,15 %</text>
</svg>
<style>.nt span{position:absolute;white-space:nowrap;font-size:14px;line-height:19px;color:#474747}</style>
<div class="nt"><span style="left:28.15px;top:552.8px;letter-spacing:-0.380px">Resources</span><span style="left:95.65px;top:552.8px;letter-spacing:0.089px">are</span><span style="left:120.15px;top:552.8px;letter-spacing:0.348px">related</span><span style="left:169.40px;top:552.8px;letter-spacing:0.656px">to</span><span style="left:186.40px;top:552.8px;letter-spacing:0.158px">rejections</span><span style="left:251.90px;top:552.8px;letter-spacing:0.008px">when</span><span style="left:289.40px;top:552.8px;letter-spacing:0.109px">linked</span><span style="left:330.65px;top:552.8px;letter-spacing:0.656px">to</span><span style="left:346.90px;top:552.8px;letter-spacing:0.148px">rejected</span><span style="left:401.90px;top:552.8px;letter-spacing:0.277px">routing</span><span style="left:451.15px;top:552.8px;letter-spacing:-0.169px">positions'</span><span style="left:513.65px;top:552.8px;letter-spacing:-0.286px">inspections,</span><span style="left:590.65px;top:552.8px;letter-spacing:-0.102px">or</span><span style="left:608.15px;top:552.8px;letter-spacing:0.008px">when</span><span style="left:646.40px;top:552.8px;letter-spacing:-0.156px">the</span><span style="left:669.90px;top:552.8px;letter-spacing:0.303px">manufactured</span><span style="left:763.15px;top:552.8px;letter-spacing:0.159px">items</span><span style="left:801.40px;top:552.8px;letter-spacing:0.255px">are</span><span style="left:826.40px;top:552.8px;letter-spacing:0.211px">rejected</span><span style="left:881.90px;top:552.8px;letter-spacing:0.497px">after</span><span style="left:916.90px;top:552.8px;letter-spacing:0.156px">production.</span><span style="left:992.40px;top:552.8px;letter-spacing:0.031px">In</span><span style="left:1008.15px;top:552.8px;letter-spacing:-0.073px">the</span><span style="left:1031.40px;top:552.8px;letter-spacing:-0.645px">case</span><span style="left:1063.15px;top:552.8px;letter-spacing:0.531px">of</span><span style="left:1079.90px;top:552.8px;letter-spacing:0.303px">manufactured</span><span style="left:1173.15px;top:552.8px;letter-spacing:0.104px">items'</span><span style="left:1215.15px;top:552.8px;letter-spacing:0.131px">rejections,</span><span style="left:1284.90px;top:552.8px;letter-spacing:0.078px">all</span><span style="left:1303.65px;top:552.8px;letter-spacing:0.406px">of</span><span style="left:1319.90px;top:552.8px;letter-spacing:-0.073px">the</span><span style="left:1343.60px;top:552.8px;letter-spacing:0.037px">resources</span><span style="left:1408.40px;top:552.8px;letter-spacing:-0.290px">used</span><span style="left:28.15px;top:572.0px;letter-spacing:0.047px">in</span><span style="left:43.15px;top:572.0px;letter-spacing:0.503px">their</span><span style="left:76.90px;top:572.0px;letter-spacing:0.186px">production</span><span style="left:148.15px;top:572.0px;letter-spacing:-0.254px">process</span><span style="left:199.90px;top:572.0px;letter-spacing:0.574px">will</span><span style="left:225.65px;top:572.0px;letter-spacing:-0.152px">have</span><span style="left:259.40px;top:572.0px;letter-spacing:0.503px">their</span><span style="left:293.65px;top:572.0px;letter-spacing:0.148px">rejection</span><span style="left:352.40px;top:572.0px;letter-spacing:0.185px">counter</span><span style="left:404.90px;top:572.0px;letter-spacing:-0.034px">increased.</span></div>
<div class="abs" style="left:1443px;top:547px;width:15px;height:41.5px;background:#efefef;border:1px solid #e2e2e2"></div>
<div class="abs" style="left:1444px;top:548px;width:13px;height:14px;background:#fff;border:1px solid #ebebeb"><svg width="7" height="4" viewBox="0 0 7 4" style="position:absolute;left:2px;top:4px"><path d="M0 4L3.5 0L7 4Z" fill="#cfcfcf"/></svg></div>
<div class="abs" style="left:1444px;top:573.5px;width:13px;height:14px;background:#fff;border:1px solid #ebebeb"><svg width="7" height="4" viewBox="0 0 7 4" style="position:absolute;left:2px;top:4.5px"><path d="M0 0L3.5 4L7 0Z" fill="#cfcfcf"/></svg></div>
</div>
<div class="frame"></div>
</body></html>
